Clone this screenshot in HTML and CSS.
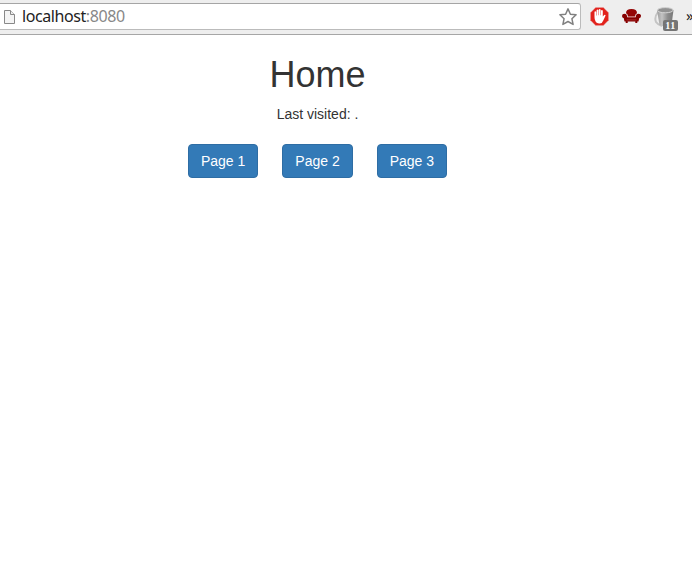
FILE: index.html
```html
<!DOCTYPE html>
<html lang="en">
<head>
<meta charset="utf-8">
<title>Home</title>
<link rel="stylesheet" href="styles.css">
</head>
<body>
<header class="toolbar">
  <div class="address">
    <svg class="doc" width="13" height="16" viewBox="0 0 13 16"><path d="M1.500 1.500h6l4 4v9h-10z" fill="#f4f4f4" stroke="#888"/><path d="M7.500 1.500v4h4" fill="#eee" stroke="#888"/></svg>
    <span class="url">localhost<span class="port">:8080</span></span>
    <svg class="star" width="20" height="20" viewBox="0 0 20 20"><path d="M10 1.900l2.400 5.300 5.700.6-4.200 3.900 1.200 5.700-5.100-2.900-5.100 2.900 1.200-5.700-4.200-3.900 5.700-.6z" fill="#fff" stroke="#808080" stroke-width="1.500" stroke-linejoin="round"/></svg>
  </div>
  <svg class="block" width="19" height="19" viewBox="0 0 19 19"><path d="M5.700.5h7.600l5.200 5.200v7.600l-5.200 5.200H5.700L.5 13.300V5.700z" fill="#e2221c" stroke="#e79a98" stroke-width=".6"/><path d="M4.500 10V4.700q.9-.9 1.700 0V8.600h.4V3q.9-.9 1.800 0v5.300h.4V2.400q.9-.9 1.800 0v5.900h.4V3.500q.9-.9 1.800 0v6l1.400-1.500q1-.6 1.400.4l-2.200 4.900q-.9 3-3.600 3.200-3.500.2-4.500-2.700-.8-1.800-.8-3.800z" fill="#fff"/></svg>
  <svg class="chair" width="19" height="16" viewBox="0 0 19 16"><path d="M4 5.200Q4 1 9.500 1T15 5.200q-1.700.5-2 3.300H6Q5.700 5.700 4 5.200z" fill="#940505"/><path d="M0 8q0-2.200 2.500-2.200T5.200 9.200h8.600q0-3.400 2.700-3.400T19 8q0 1.800-1.800 2.300l-.7 3.200h-1.200V15h-2v-1.500H5.700V15h-2v-1.500H2.500l-.7-3.200Q0 9.800 0 8z" fill="#850000"/><path d="M5.600 8.900h7.800M4.500 11.900h10" stroke="#cc5a5a" stroke-width=".5"/></svg>
  <div class="bucket">
    <svg width="24" height="25" viewBox="0 0 24 25"><defs><linearGradient id="metal"><stop offset="0" stop-color="#999"/><stop offset=".3" stop-color="#c4c4c4"/><stop offset=".65" stop-color="#8c8c8c"/><stop offset="1" stop-color="#777"/></linearGradient></defs><path d="M4 6Q0 11 2 16q2 3 6 4" fill="none" stroke="#c4c4c4" stroke-width="2"/><path d="M3 4h16.500l-2 15q-5 3-12 0z" fill="url(#metal)"/><ellipse cx="11.300" cy="4.200" rx="7.800" ry="2.600" fill="#929292" stroke="#d4d4d4"/></svg>
    <span class="badge">11</span>
  </div>
  <span class="more">»</span>
</header>
<main class="container">
  <h1>Home</h1>
  <p>Last visited: .</p>
  <nav class="pages"><a class="btn">Page 1</a><a class="btn">Page 2</a><a class="btn">Page 3</a></nav>
</main>
</body>
</html>
```
FILE: styles.css
```css
* { box-sizing: border-box; }
body {
  margin: 0;
  background: #fff;
  color: #333;
  font: 14px/20px "Liberation Sans", Arial, sans-serif;
  overflow: hidden;
}
.toolbar {
  display: flex;
  height: 35px;
  background: #eee;
  border-bottom: 1px solid #a6a6a6;
}
.address {
  display: flex;
  flex: none;
  width: 584px;
  height: 27px;
  margin: 3px 0 0 -3px;
  padding-left: 5px;
  border: 1px solid #bbb;
  border-top-color: #a5a5a5;
  border-radius: 3px;
  background: #fff;
}
.doc { margin-top: 5px; }
.url {
  margin-left: 6px;
  font: 16px/25px "Noto Sans", sans-serif;
  letter-spacing: -0.42px;
  color: #222;
}
.port { color: #888; }
.star { margin: 3px 2px 0 auto; }
.block { flex: none; margin: 7px 0 0 9px; }
.chair { flex: none; margin: 8px 0 0 13px; }
.bucket {
  position: relative;
  flex: none;
  width: 24px;
  height: 25px;
  margin: 6px 0 0 13px;
}
.badge {
  position: absolute;
  left: 9px;
  top: 14px;
  width: 15px;
  height: 11px;
  border-radius: 2px;
  background: #757575;
  color: #fff;
  font: bold 10px/11px "Liberation Serif", serif;
  letter-spacing: 0.5px;
  text-align: center;
}
.more {
  margin: 6px 0 0 8px;
  font: 15px/18px "Noto Sans", sans-serif;
  color: #222;
}
.container {
  width: 635px;
  text-align: center;
}
h1 {
  margin: 20px 0 10px;
  font-size: 36px;
  font-weight: 500;
  line-height: 39px;
}
p { margin: 0 0 20px; }
.pages {
  display: flex;
  justify-content: center;
  gap: 24px;
}
.btn {
  padding: 6px 12px;
  border: 1px solid #2e6da4;
  border-radius: 4px;
  background: #337ab7;
  color: #fff;
}
```
